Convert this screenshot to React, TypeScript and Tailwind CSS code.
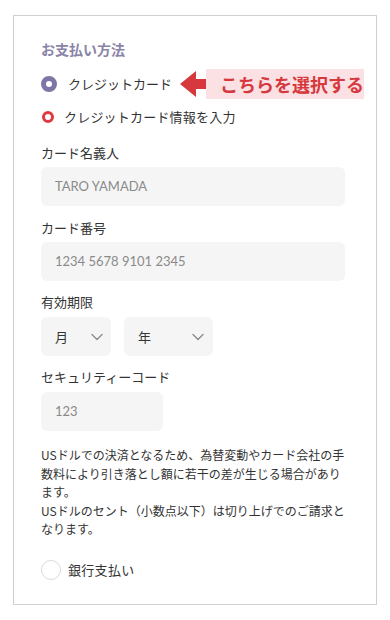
import React from "react";

const jp = "font-['Noto_Sans_CJK_JP','Noto_Sans',sans-serif]";

function Chevron() {
    return (
        <svg width="12" height="8" viewBox="0 0 12 8" fill="none">
            <path d="M1 1.5 6 6.5 11 1.5" stroke="#8c8c8c" strokeWidth="1.4" strokeLinecap="round" strokeLinejoin="round" />
        </svg>
    );
}

function Arrow() {
    return (
        <svg width="34" height="26" viewBox="0 0 34 26" className="shrink-0">
            <path d="M0 13 16 0V8H34V18H16V26Z" fill="#d7383e" />
        </svg>
    );
}

const notes = [
    "USドルでの決済となるため、為替変動やカード会社の手",
    "数料により引き落とし額に若干の差が生じる場合があり",
    "ます。",
    "USドルのセント（小数点以下）は切り上げでのご請求と",
    "なります。",
];

export default function App() {
    return (
        <div className={`min-h-[620px] bg-white pt-[15px] pl-[13px] ${jp}`}>
            <div className="w-[364px] h-[590px] border border-[#cfcfcf] pl-[27px] pr-[31px] pt-[23px] text-[#333]">
                <h2 className="text-[14px] leading-[20px] font-bold text-[#8a84a6]">お支払い方法</h2>

                {/* selected method */}
                <div className="mt-[10px] h-[30px] flex items-center whitespace-nowrap">
                    <span className="shrink-0 w-[16px] h-[16px] rounded-full border-[5px] border-[#7f76a8] bg-white" />
                    <span className="shrink-0 ml-[11px] text-[13px]">クレジットカード</span>
                    <span className="shrink-0 ml-[8px] flex items-center">
                        <Arrow />
                        <span className="shrink-0 -ml-[8px] h-[30px] w-[158px] bg-[#fbe1e3] flex items-center pl-[14px] text-[18px] font-bold text-[#d7383e]">
                            こちらを選択する
                        </span>
                    </span>
                </div>

                <div className="mt-[8px] h-[20px] flex items-center">
                    <span className="shrink-0 ml-[1px] w-[12px] h-[12px] rounded-full border-[3.5px] border-[#dd3b3f] bg-white" />
                    <span className="ml-[10px] text-[13px] tracking-[0.2px] whitespace-nowrap">クレジットカード情報を入力</span>
                </div>

                <label className="block mt-[16px] text-[13px] leading-[20px]">カード名義人</label>
                <div className="mt-[4px] h-[39px] w-[304px] rounded-[6px] bg-[#f5f5f5] flex items-center pl-[14px] font-['Lato',sans-serif] text-[13px] text-[#8a8a8a]">
                    TARO YAMADA
                </div>

                <label className="block mt-[12px] text-[13px] leading-[20px]">カード番号</label>
                <div className="mt-[4px] h-[39px] w-[304px] rounded-[6px] bg-[#f5f5f5] flex items-center pl-[14px] font-['Lato',sans-serif] text-[13px] text-[#8a8a8a]">
                    1234 5678 9101 2345
                </div>

                <label className="block mt-[11px] text-[13px] leading-[20px]">有効期限</label>
                <div className="mt-[5px] flex gap-[13px]">
                    <div className="h-[39px] w-[70px] rounded-[6px] bg-[#f5f5f5] flex items-center justify-between pl-[14px] pr-[8px] text-[13px]">
                        <span>月</span>
                        <Chevron />
                    </div>
                    <div className="h-[39px] w-[89px] rounded-[6px] bg-[#f5f5f5] flex items-center justify-between pl-[14px] pr-[9px] text-[13px]">
                        <span>年</span>
                        <Chevron />
                    </div>
                </div>

                <label className="block mt-[11px] text-[13px] leading-[20px]">セキュリティーコード</label>
                <div className="mt-[5px] h-[39px] w-[122px] rounded-[6px] bg-[#f5f5f5] flex items-center pl-[14px] font-['Lato',sans-serif] text-[13px] text-[#8a8a8a]">
                    123
                </div>

                <div className="mt-[15px] text-[12px] leading-[18.5px] text-[#333]">
                    {notes.map((line) => (
                        <p key={line} className="whitespace-nowrap">{line}</p>
                    ))}
                </div>

                <div className="mt-[19px] h-[24px] flex items-center">
                    <span className="shrink-0 w-[20px] h-[20px] rounded-full border border-[#d9d9d9] bg-white" />
                    <span className="ml-[7px] text-[13px] tracking-[0.3px]">銀行支払い</span>
                </div>
            </div>
        </div>
    );
}
